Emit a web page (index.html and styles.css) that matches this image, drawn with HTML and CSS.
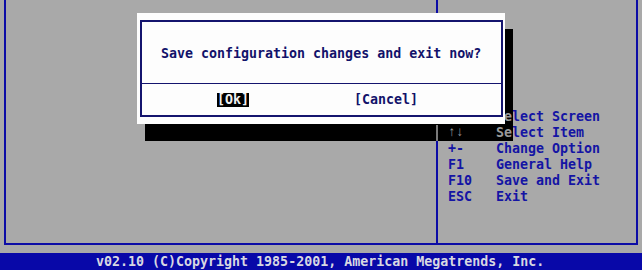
FILE: index.html
```html
<!DOCTYPE html>
<html lang="en">
<head>
    <meta charset="UTF-8">
    <title>BIOS Setup - Exit</title>
    <link rel="stylesheet" href="styles.css">
</head>
<body>
    <div class="frame">
        <div class="main-panel"></div>
        <div class="side-panel">
            <div class="help">
                <span class="arrows">&larr;&rarr;</span><span>S<span class="shaded">e</span>lect Screen</span>
                <span class="arrows shaded">&uarr;&darr;</span><span><span class="shaded">Se</span>lect Item</span>
                <span>+-</span><span>Change Option</span>
                <span>F1</span><span>General Help</span>
                <span>F10</span><span>Save and Exit</span>
                <span>ESC</span><span>Exit</span>
            </div>
        </div>
    </div>
    <div class="footer">v02.10 (C)Copyright 1985-2001, American Megatrends, Inc.</div>

    <!-- dialog drop shadow -->
    <div class="shadow"></div>

    <div class="dialog">
        <div class="dialog-box">
            <div class="dialog-message">Save configuration changes and exit now?</div>
            <div class="dialog-buttons">
                <span class="btn selected">[Ok]</span>
                <span class="btn">[Cancel]</span>
            </div>
        </div>
    </div>
</body>
</html>
```

FILE: styles.css
```css
body {
    margin: 0;
    width: 642px;
    height: 270px;
    overflow: hidden;
    position: relative;
    background: #a9a9a9;
    font-family: "DejaVu Sans Mono", "Liberation Mono", monospace;
    font-size: 13.3px;
    font-weight: bold;
    line-height: 16px;
    color: #1414a4;
}

.frame {
    box-sizing: border-box;
    margin-left: 4px;
    width: 634px;
    height: 245px;
    border-left: 2px solid #0c0ca6;
    border-right: 2px solid #0c0ca6;
    border-bottom: 2px solid #0c0ca6;
    display: grid;
    grid-template-columns: 430px 1fr;
}

.side-panel {
    border-left: 2px solid #0c0ca6;
}

.help {
    padding-top: 109px;
    padding-left: 10px;
    display: grid;
    grid-template-columns: 48px auto;
}

.arrows {
    font-family: "Liberation Mono", monospace;
}

/* text that sits under the dialog shadow */
.shaded {
    position: relative;
    z-index: 2;
    color: #9a9a9a;
}

.footer {
    margin-top: 8px;
    height: 17px;
    line-height: 17px;
    padding-left: 96px;
    background: #0808a8;
    color: #d8d8e2;
}

/* dialog */
.dialog {
    position: absolute;
    left: 137px;
    top: 13px;
    width: 368px;
    height: 111px;
    box-sizing: border-box;
    padding: 7px 2px 7px 3px;
    background: #fdfdfd;
    z-index: 3;
}

.dialog-box {
    height: 97px;
    box-sizing: border-box;
    border: 2px solid #14146e;
    color: #12126a;
}

.dialog-message {
    height: 62px;
    box-sizing: border-box;
    padding: 24px 0 0 19px;
    border-bottom: 1px solid #14146e;
}

.dialog-buttons {
    display: flex;
    align-items: center;
    height: 32px;
    padding-left: 75px;
    gap: 105px;
}

.btn {
    line-height: 14px;
}

.btn.selected {
    background: #000;
    color: #f0f0f0;
}

.shadow {
    position: absolute;
    left: 145px;
    top: 29px;
    width: 368px;
    height: 112px;
    background: #000;
    z-index: 1;
}

/* divider line seen through the shadow */
.shadow::after {
    content: '';
    position: absolute;
    left: 291px;
    top: 96px;
    width: 2px;
    height: 16px;
    background: #7a7a7a;
}
```
